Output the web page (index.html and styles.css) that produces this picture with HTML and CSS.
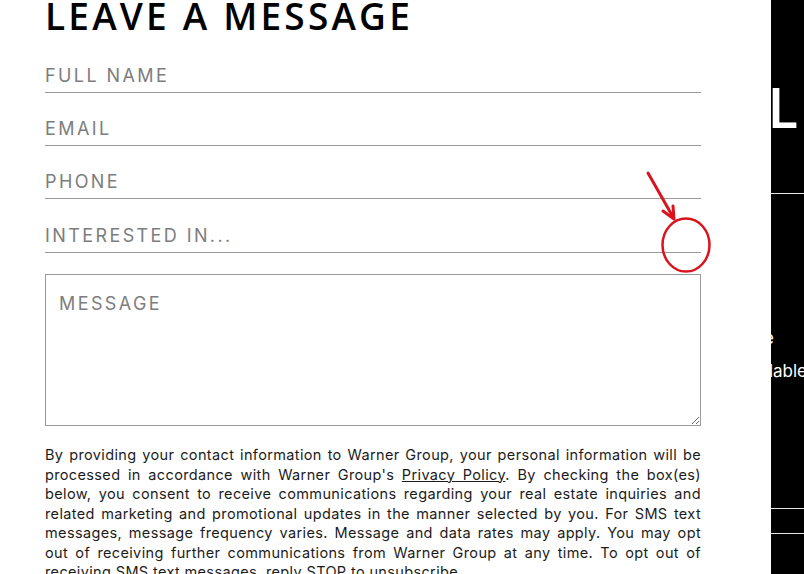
FILE: index.html
```html
<!DOCTYPE html>
<html lang="en">
<head>
<meta charset="utf-8">
<title>Leave a message</title>
<link rel="stylesheet" href="styles.css">
</head>
<body>
<div class="page">
  <main class="main">
    <h1 class="title">LEAVE A MESSAGE</h1>
    <form class="form">
      <input class="field" type="text" placeholder="FULL NAME">
      <input class="field" type="email" placeholder="EMAIL">
      <input class="field" type="tel" placeholder="PHONE">
      <input class="field" type="text" placeholder="INTERESTED IN...">
      <textarea class="message" placeholder="MESSAGE"></textarea>
      <p class="legal">By providing your contact information to Warner Group, your personal information will be processed in accordance with Warner Group's <a href="#">Privacy Policy</a>. By checking the box(es) below, you consent to receive communications regarding your real estate inquiries and related marketing and promotional updates in the manner selected by you. For SMS text messages, message frequency varies. Message and data rates may apply. You may opt <span class="nw">out of</span> receiving further communications from Warner Group at any time. To opt out of receiving SMS text messages, reply STOP to unsubscribe.</p>
    </form>
  </main>
  <aside class="panel">
    <div class="panel-head">
      <div class="clip clip-title"><span>EMAIL</span></div>
    </div>
    <div class="panel-body">
      <div class="clip clip-line1"><span>Our team is here</span></div>
      <div class="line2"><div class="clip clip-pre"><span>we are avail</span></div><span>able anytime</span></div>
    </div>
    <div class="panel-strip"></div>
    <div class="panel-foot"></div>
  </aside>
  <svg class="note" width="80" height="120" viewBox="0 0 80 120" aria-hidden="true">
    <line x1="8" y1="13" x2="33" y2="57" stroke="#d9141c" stroke-width="3" stroke-linecap="round"/>
    <polyline points="23,51 34,59 33,46" fill="none" stroke="#d9141c" stroke-width="3" stroke-linecap="round" stroke-linejoin="round"/>
    <ellipse cx="46" cy="85" rx="23.5" ry="26.5" fill="none" stroke="#d9141c" stroke-width="2.5"/>
  </svg>
</div>
</body>
</html>
```

FILE: styles.css
```css
* { box-sizing: border-box; }
html, body { margin: 0; padding: 0; background: #fff; }
body { overflow: hidden; height: 574px; }

.page {
  position: relative;
  display: grid;
  grid-template-columns: 771px 1fr;
  height: 574px;
}

.main {
  padding-left: 45px;
  padding-right: 70px;
}

.title {
  margin: -4px 0 5px 0;
  font-family: "Open Sans", "DejaVu Sans", sans-serif;
  font-weight: 600;
  font-size: 37px;
  line-height: 40px;
  color: #000;
  letter-spacing: 3.2px;
}

.form {
  display: flex;
  flex-direction: column;
  width: 656px;
}

.field {
  display: block;
  width: 100%;
  height: 40px;
  margin-top: 13px;
  padding: 6px 0 0 0;
  border: 0;
  border-bottom: 1px solid #9a9a9a;
  background: transparent;
  font-family: "Inter", "Open Sans", sans-serif;
  font-size: 18px;
  letter-spacing: 2.4px;
  color: #333;
  outline: none;
}
.field:first-child { margin-top: 12px; }
.field:nth-child(4) { height: 41px; }
.field::placeholder { color: #7d7d7d; opacity: 1; }

.message {
  display: block;
  width: 100%;
  height: 152px;
  margin-top: 21px;
  padding: 18px 13px;
  border: 1px solid #9a9a9a;
  border-radius: 0;
  font-family: "Inter", "Open Sans", sans-serif;
  font-size: 18px;
  letter-spacing: 2.4px;
  color: #333;
  outline: none;
  resize: vertical;
}
.message::placeholder { color: #7d7d7d; opacity: 1; }

.legal {
  margin: 19px 0 0 0;
  font-family: "Inter", "Open Sans", sans-serif;
  font-size: 14.5px;
  line-height: 19.5px;
  color: #1c1c1c;
  text-align: justify;
  letter-spacing: 0.36px;
}
.legal a { color: #1c1c1c; text-decoration: underline; }
.nw { white-space: nowrap; }

.panel {
  background: #000;
  overflow: hidden;
  display: flex;
  flex-direction: column;
  color: #fff;
  font-family: "Inter", "Open Sans", sans-serif;
}
.panel-head {
  height: 194px;
  border-bottom: 1px solid #e6e6e6;
  padding-top: 75px;
}
.clip {
  display: flex;
  justify-content: flex-end;
  white-space: nowrap;
}
.clip-title {
  width: 27px;
  font-family: "Open Sans", sans-serif;
  font-weight: 600;
  font-size: 56px;
  line-height: 62px;
}
.panel-body {
  height: 315px;
  border-bottom: 1px solid #e6e6e6;
  padding-top: 128px;
  font-size: 17px;
  line-height: 33px;
}
.clip-line1 { width: 3px; }
.line2 { display: flex; white-space: nowrap; }
.clip-pre { width: 2px; }
.panel-strip {
  height: 25px;
  border-bottom: 1px solid #e6e6e6;
}
.panel-foot { flex: 1; }

.note {
  position: absolute;
  left: 640px;
  top: 160px;
}
```
